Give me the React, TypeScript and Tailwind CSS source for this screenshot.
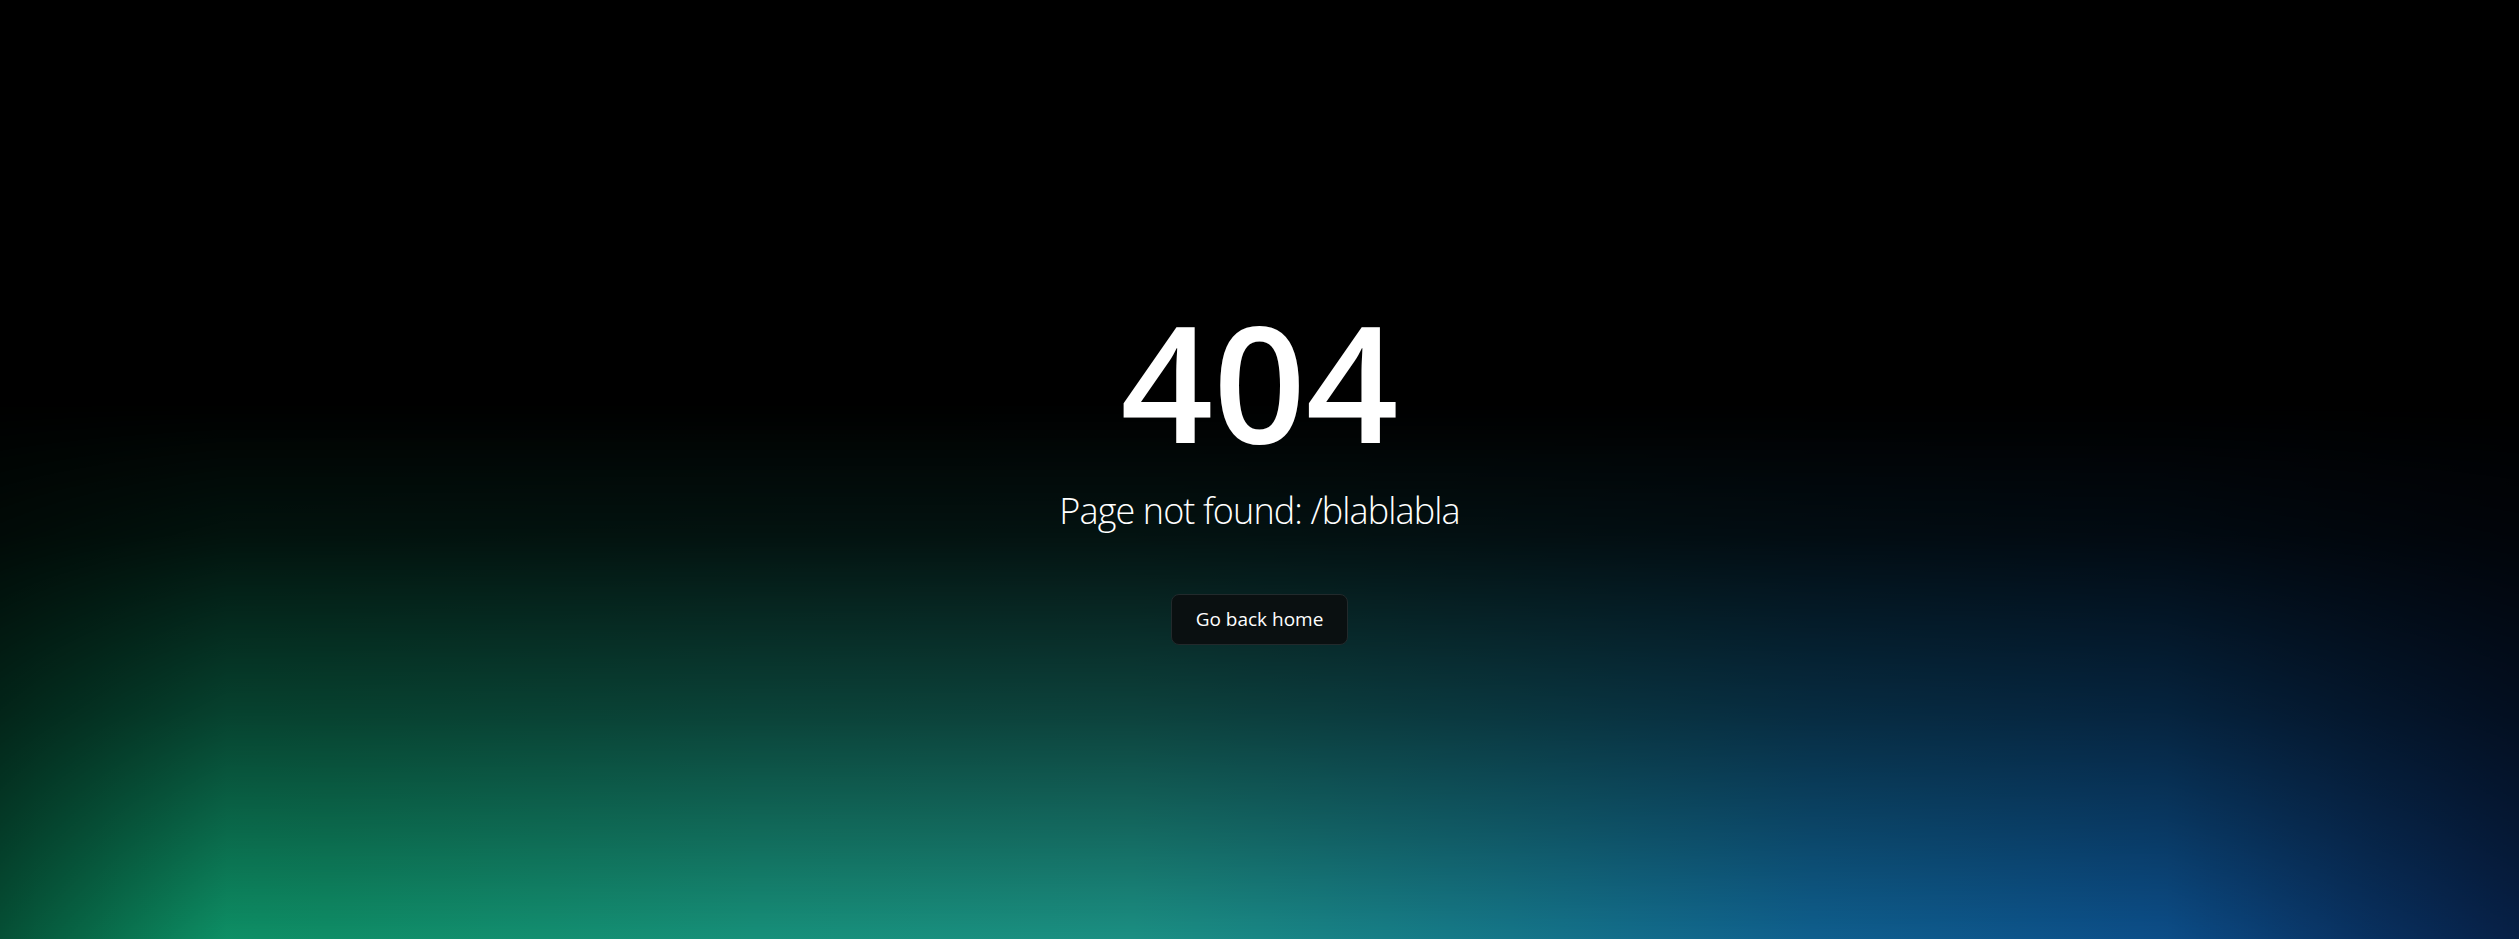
export default function App() {
  return (
    <div className="relative h-screen w-full overflow-hidden bg-black font-['Open_Sans',sans-serif] text-white">
      {/* aurora glow along the bottom edge */}
      <div className="pointer-events-none absolute inset-0 bg-[linear-gradient(to_right,#0a9262_0%,#0f8e67_13%,#17907a_30%,#1b8f83_45%,#157689_60%,#0f5f8e_72%,#0c4f89_85%,#0b3574_100%)] [mask-image:linear-gradient(to_bottom,transparent_43%,rgba(0,0,0,0.13)_57%,rgba(0,0,0,0.46)_76%,rgba(0,0,0,0.72)_88%,black_100%),linear-gradient(to_right,rgba(0,0,0,0.55)_0%,black_9%,black_86%,rgba(0,0,0,0.6)_100%)] [mask-composite:intersect]" />

      <main className="relative flex h-full flex-col items-center justify-center pt-[5px]">
        <h1 className="text-[162px] leading-none font-semibold">404</h1>
        <p className="mt-[27px] text-[36px] leading-[1.3] font-light tracking-[-0.9px]">Page not found: /blablabla</p>
        <button
          type="button"
          className="mt-[59px] h-[51px] rounded-lg border border-[#222a2c] bg-[#0a1011] px-6 text-[19px] font-medium text-white"
        >
          Go back home
        </button>
      </main>
    </div>
  );
}
